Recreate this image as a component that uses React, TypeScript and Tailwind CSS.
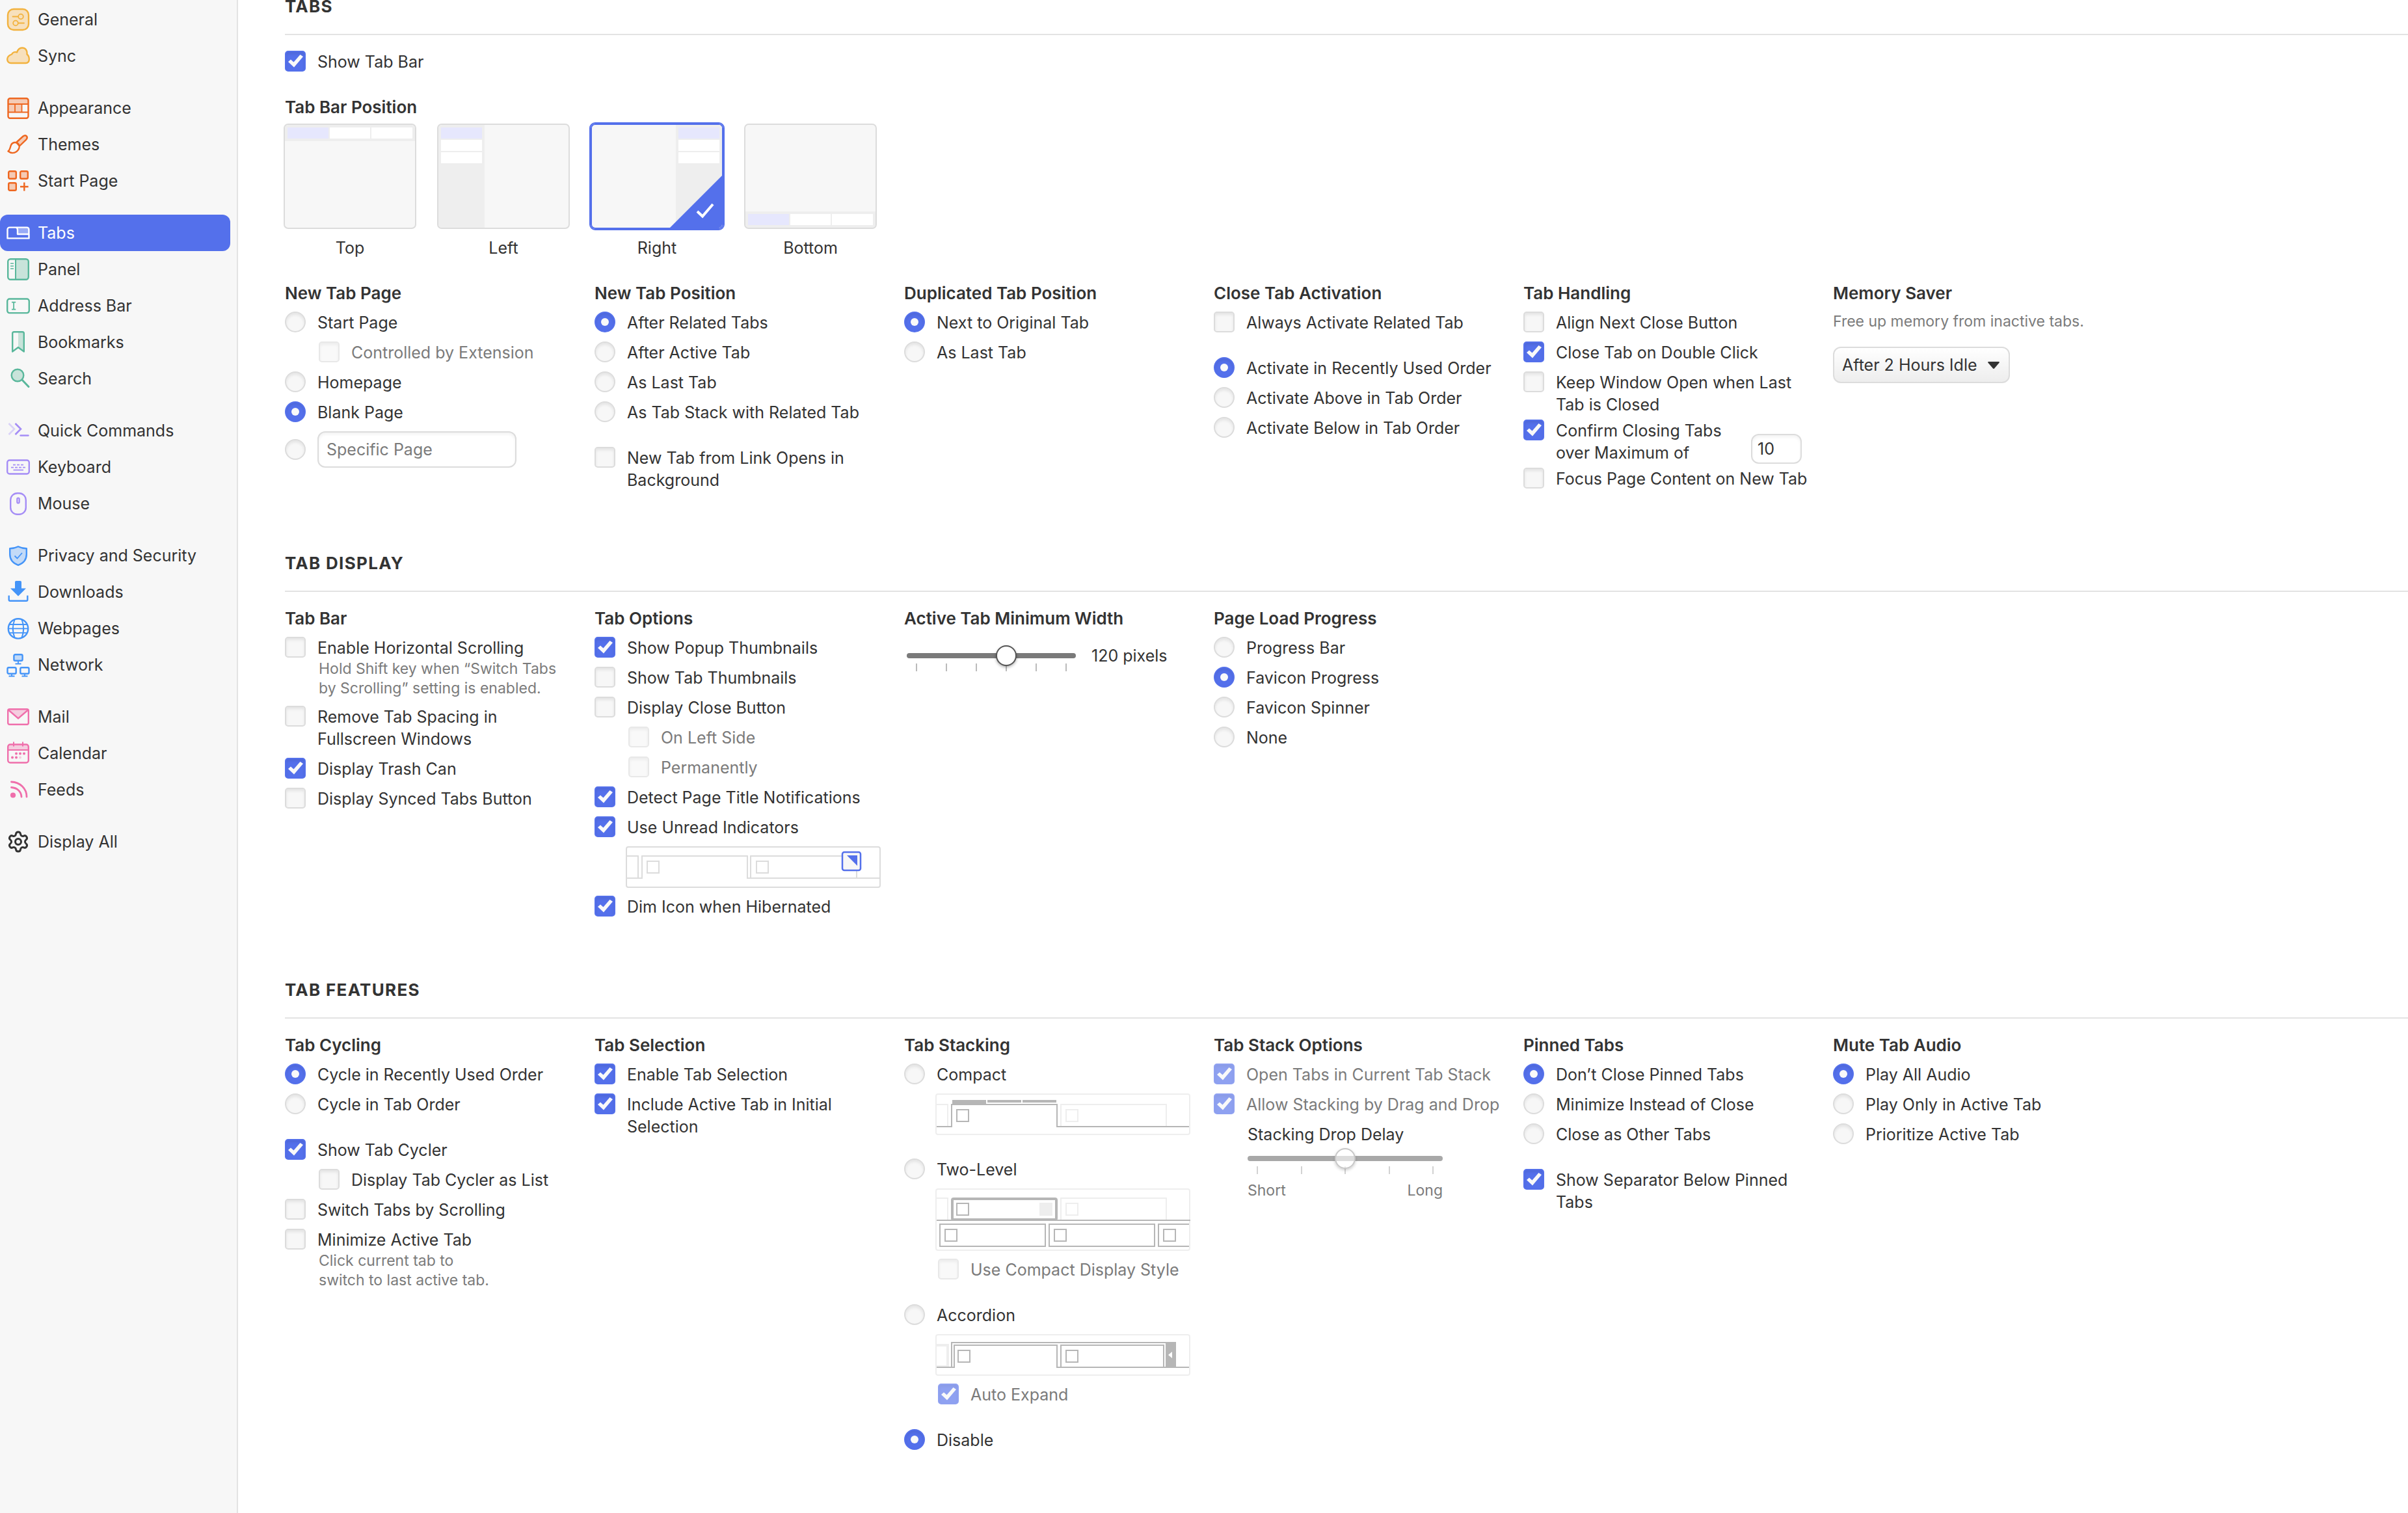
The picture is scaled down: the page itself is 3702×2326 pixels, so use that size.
import React from "react";
import { Settings } from "lucide-react";

/* ---------- sidebar icons ---------- */

function Svg({ children }: { children: React.ReactNode }) {
  return (
    <svg viewBox="0 0 36 36" width={36} height={36} fill="none" strokeWidth={2.4} aria-hidden="true" className="shrink-0 overflow-visible">
      {children}
    </svg>
  );
}

const Y = "#f2b23e";
const YL = "#f7e0bc";
const O = "#ee6720";
const OL = "#f5cbb5";
const G = "#59b79b";
const GL = "#c8e3da";
const P = "#a58df6";
const PL = "#dad2f8";
const B = "#4494f8";
const BL = "#c3daf7";
const K = "#ef6fab";
const KL = "#f4cddf";

const icons: Record<string, React.ReactNode> = {
  General: (
    <Svg>
      <rect x="2" y="2" width="32" height="32" rx="9" stroke={Y} fill={YL} />
      <g stroke={Y} strokeWidth="1.8" strokeLinecap="round">
        <path d="M9.5 13.500h8.500M18 23.500h9" />
        <circle cx="22" cy="13.500" r="3.800" />
        <circle cx="14" cy="23.500" r="3.800" />
      </g>
    </Svg>
  ),
  Sync: (
    <Svg>
      <path d="M7 29C3.500 29 1.200 26.500 1.200 23c0-3.500 2.800-6 6.800-7.500 1.500-3.200 5-4.200 8-3C17.500 8 20.500 5.500 24 5.500c5 0 8 3.500 7.500 10 2 1.500 3.300 4.500 3.300 7.500 0 4-2.300 6-5.300 6z" stroke={Y} fill={YL} strokeLinejoin="round" />
    </Svg>
  ),
  Appearance: (
    <Svg>
      <path d="M3 4h30v8H3zM3 12h20v12H3z" fill={OL} />
      <rect x="2.500" y="3.200" width="31" height="30.600" rx="3" stroke={O} />
      <path d="M2.500 12h31M2.500 24.500h31M13 12v12.500M23.500 12v12.500" stroke={O} strokeWidth="1.800" />
    </Svg>
  ),
  Themes: (
    <Svg>
      <path d="M15 15 25.500 5.500c4-3.400 8.200.8 5 4.800L20 20.500z" stroke={O} fill={OL} strokeLinejoin="round" />
      <path d="M2.500 28.500c3-2 2.800-5.500 4.500-9.500 2-4.500 8.500-5.500 11.500-1.500 2.500 3.500 1 8.500-3 11.500-4 2.800-9 2.500-13-.5z" stroke={O} strokeLinejoin="round" />
    </Svg>
  ),
  "Start Page": (
    <Svg>
      <g stroke={O} fill={OL}>
        <rect x="3.200" y="3.200" width="11.600" height="11.600" rx="2" />
        <rect x="21.200" y="3.200" width="11.600" height="11.600" rx="2" />
        <rect x="3.200" y="21.200" width="11.600" height="11.600" rx="2" />
      </g>
      <path d="M27.300 20.500v13M21 27h12.600" stroke={O} />
    </Svg>
  ),
  Tabs: (
    <Svg>
      <path d="M18 12c0-1.500.8-2.400 2.400-2.400H31c2.300 0 3.400 1.300 3.400 3.400v7H18z" fill="#99abf6" />
      <path d="M34.400 20V13c0-2.100-1.100-3.400-3.400-3.400H5c-2.300 0-3.500 1.300-3.500 3.400v13.400h33V20H17v-6.500c0-2.500-1-3.900-3-3.900" stroke="#fff" strokeLinejoin="round" />
    </Svg>
  ),
  Panel: (
    <Svg>
      <path d="M14 2h17c2 0 3 1 3 3v26c0 2-1 3-3 3H14z" fill={GL} />
      <rect x="2.200" y="2.200" width="31.600" height="31.600" rx="4" stroke={G} />
      <path d="M14 2v32" stroke={G} strokeWidth="2" />
      <path d="M6 9h5M6 13h5M6 17h5" stroke={G} strokeWidth="1.600" />
    </Svg>
  ),
  "Address Bar": (
    <Svg>
      <rect x="1.200" y="7.500" width="33.600" height="21.600" rx="3.500" stroke={G} />
      <path d="M8 12.700h6.200M8 23.700h6.200M11.100 12.700v11" stroke={G} strokeWidth="1.800" />
    </Svg>
  ),
  Bookmarks: (
    <Svg>
      <path d="M18 2h7c1.300 0 2 .7 2 2v28.500L18 25z" fill={GL} />
      <path d="M9.200 4.500c0-1.500.8-2.300 2.300-2.300h13c1.500 0 2.300.8 2.300 2.300v28L18 26l-8.800 6.500z" stroke={G} strokeLinejoin="round" />
    </Svg>
  ),
  Search: (
    <Svg>
      <circle cx="17" cy="13" r="9.300" stroke={G} fill={GL} />
      <path d="m24 20 10 10.500" stroke={G} strokeWidth="3" strokeLinecap="round" />
    </Svg>
  ),
  "Quick Commands": (
    <Svg>
      <path d="m3.500 7 8.500 8.500-8.500 8.500" stroke={PL} strokeWidth="2.600" />
      <path d="m13.500 7 8.500 8.500-8.500 8.500" stroke={P} strokeWidth="2.600" />
      <path d="M21.500 25.500h12" stroke={P} strokeLinecap="round" />
    </Svg>
  ),
  Keyboard: (
    <Svg>
      <rect x="1.200" y="7.500" width="33.600" height="21" rx="3.500" stroke={P} />
      <g stroke={P} strokeWidth="1.800">
        <path d="M10 14.600h16.500" strokeDasharray="4 2" />
        <path d="M7 18.600h22.500" strokeDasharray="4 2" />
        <path d="M10.500 22.600h15.500" />
      </g>
    </Svg>
  ),
  Mouse: (
    <Svg>
      <rect x="6.200" y="2.200" width="23.600" height="32.600" rx="10.500" stroke={P} />
      <rect x="16.200" y="9.500" width="3.600" height="8" rx="1.800" stroke={P} fill={PL} strokeWidth="2" />
    </Svg>
  ),
  "Privacy and Security": (
    <Svg>
      <path d="M18 4.300c4 2 8.500 2.900 12.800 3V16c0 8.500-5 14-12.800 16.800C10.200 30 5.200 24.500 5.200 16V7.300c4.300-.1 8.800-1 12.800-3z" stroke={B} fill={BL} strokeLinejoin="round" />
      <path d="m12.500 18.500 4 4 7.500-8.500" stroke={B} strokeWidth="1.800" />
    </Svg>
  ),
  Downloads: (
    <Svg>
      <path d="M13 3c0-1.300.7-2 2-2h6c1.300 0 2 .7 2 2v9.500h7L18 24.500 6 12.500h7z" fill={B} />
      <path d="M3.700 23.500V30c0 1.200.6 1.800 1.800 1.800h25c1.200 0 1.800-.6 1.800-1.800v-6.500" stroke={B} />
    </Svg>
  ),
  Webpages: (
    <Svg>
      <circle cx="18" cy="18.400" r="15.200" stroke={B} />
      <path d="M12.500 4.500c-3.300 8.500-3.300 19.300 0 27.800M23.500 4.500c3.300 8.500 3.300 19.300 0 27.800" stroke={B} strokeWidth="2" />
      <path d="M4 12h28M3 18.400h30M4 24.800h28" stroke={B} strokeWidth="1.800" />
    </Svg>
  ),
  Network: (
    <Svg>
      <g stroke={B}>
        <rect x="11.400" y="2.200" width="13.200" height="9.600" rx="2" fill={BL} />
        <rect x="1.500" y="22.200" width="13.200" height="9.600" rx="2" />
        <rect x="21.300" y="22.200" width="13.200" height="9.600" rx="2" />
        <path d="M18 12v4M13.500 16.500h9M8 32v3M3.500 35.500h9M28 32v3M23.500 35.500h9" strokeWidth="1.800" />
      </g>
    </Svg>
  ),
  Mail: (
    <Svg>
      <path d="M3 6h30L18 20.500z" fill={KL} />
      <rect x="2.200" y="6.200" width="31.600" height="23.600" rx="2.500" stroke={K} />
      <path d="m3 7.500 15 13 15-13" stroke={K} />
    </Svg>
  ),
  Calendar: (
    <Svg>
      <path d="M3 5h30v8H3z" fill={KL} />
      <rect x="2.200" y="4.500" width="31.600" height="28" rx="3.500" stroke={K} />
      <path d="M2 13h32M11 .500v7M25 .500v7" stroke={K} strokeWidth="2" />
      <g fill={K}>
        <circle cx="15" cy="18.500" r="2" />
        <circle cx="21" cy="18.500" r="2" />
        <circle cx="27" cy="18.500" r="2" />
        <circle cx="9" cy="24.500" r="2" />
        <circle cx="15" cy="24.500" r="2" />
      </g>
      <circle cx="21" cy="24.500" r="2" fill={KL} />
    </Svg>
  ),
  Feeds: (
    <Svg>
      <circle cx="10" cy="26.500" r="4.100" fill={K} />
      <path d="M7.500 14.500c8.500.5 15 6 15.500 14.500M7.500 6C20.500 6.500 31 16 31 29" stroke={K} strokeWidth="2.800" strokeLinecap="round" />
    </Svg>
  ),
  "Display All": <Settings size={36} strokeWidth={2} color="#333333" aria-hidden="true" className="shrink-0" />,
};

const groups = [
  ["General", "Sync"],
  ["Appearance", "Themes", "Start Page"],
  ["Tabs", "Panel", "Address Bar", "Bookmarks", "Search"],
  ["Quick Commands", "Keyboard", "Mouse"],
  ["Privacy and Security", "Downloads", "Webpages", "Network"],
  ["Mail", "Calendar", "Feeds"],
  ["Display All"],
];

function Sidebar() {
  return (
    <nav aria-label="Settings" className="flex w-[366px] shrink-0 flex-col gap-6 border-r-2 border-[#e3e3e3] bg-[#f7f7f7] pt-0.5">
      {groups.map((g) => (
        <ul key={g[0]}>
          {g.map((name) => (
            <li key={name}>
              <a
                href="#"
                aria-current={name === "Tabs" ? "page" : undefined}
                className="mr-2.5 flex h-14 items-center gap-3 rounded-xl pl-2.5 aria-[current=page]:bg-[#5470eb] aria-[current=page]:text-white"
              >
                {icons[name]}
                <span>{name}</span>
              </a>
            </li>
          ))}
        </ul>
      ))}
    </nav>
  );
}

/* ---------- form controls ---------- */

type OptionProps = {
  label: React.ReactNode;
  on?: boolean;
  disabled?: boolean;
  hint?: React.ReactNode;
  tight?: boolean;
};

const boxStyle =
  "peer col-start-1 row-start-1 size-8 appearance-none border-2 border-[#dcdcdc] bg-[#f7f7f7] shadow-[inset_0_3px_4px_rgba(0,0,0,0.08)] checked:border-[#5470eb] checked:bg-[#5470eb] disabled:opacity-65";

function Check({ label, on, disabled, hint, tight }: OptionProps) {
  return (
    <div className={tight ? "pb-1.5" : "pb-3"}>
      <label className={disabled ? "flex items-start gap-[18px] text-[#7b7b7b]" : "flex items-start gap-[18px]"}>
        <span className="grid shrink-0">
          <input type="checkbox" defaultChecked={on} disabled={disabled} className={boxStyle + " rounded-[5px]"} />
          <svg viewBox="0 0 32 32" className="pointer-events-none invisible z-10 col-start-1 row-start-1 size-8 peer-checked:visible" aria-hidden="true">
            <path d="M5 17l4-3.500 4.500 4L23.500 6l4.500 3-14 16.500z" fill="#f9f9f9" />
          </svg>
        </span>
        <span>{label}</span>
      </label>
      {hint && <Hint>{hint}</Hint>}
    </div>
  );
}

function Hint({ children }: { children: React.ReactNode }) {
  return <p className="ml-[52px] text-[23px] leading-[30px] text-[#7b7b7b]">{children}</p>;
}

function RadioDot({ name, on, label }: { name: string; on?: boolean; label?: string }) {
  return (
    <span className="grid shrink-0 place-items-center">
      <input type="radio" name={name} defaultChecked={on} aria-label={label} className={boxStyle + " rounded-full"} />
      <span className="pointer-events-none invisible z-10 col-start-1 row-start-1 size-3 rounded-full bg-[#f9f9f9] peer-checked:visible" />
    </span>
  );
}

function Radio({ name, label, on }: { name: string; label: string; on?: boolean }) {
  return (
    <label className="flex items-start gap-[18px] pb-3">
      <RadioDot name={name} on={on} />
      <span>{label}</span>
    </label>
  );
}

function Slider({ label, ticks, value, disabled }: { label: string; ticks: number; value: number; disabled?: boolean }) {
  return (
    <div className={disabled ? "opacity-65" : ""}>
      <input
        type="range"
        aria-label={label}
        min={0}
        max={ticks - 1}
        defaultValue={value}
        disabled={disabled}
        className="relative z-10 block h-8 w-full appearance-none bg-transparent [&::-webkit-slider-runnable-track]:h-2 [&::-webkit-slider-runnable-track]:rounded-full [&::-webkit-slider-runnable-track]:bg-[#7a7a7a] [&::-webkit-slider-thumb]:-mt-3 [&::-webkit-slider-thumb]:size-8 [&::-webkit-slider-thumb]:appearance-none [&::-webkit-slider-thumb]:rounded-full [&::-webkit-slider-thumb]:border-2 [&::-webkit-slider-thumb]:border-[#555555] [&::-webkit-slider-thumb]:bg-white [&::-webkit-slider-thumb]:shadow-[0_2px_4px_rgba(0,0,0,0.3)] disabled:[&::-webkit-slider-thumb]:border-[#aaaaaa] disabled:[&::-webkit-slider-thumb]:bg-white/60"
      />
      <div className="-mt-1 flex justify-between px-[14px]">
        {Array.from({ length: ticks }, (_, i) => (
          <span key={i} className="h-3 w-0.5 bg-[#bbbbbb]" />
        ))}
      </div>
    </div>
  );
}

/* ---------- layout helpers ---------- */

function Section({ title, children }: { title: string; children: React.ReactNode }) {
  return (
    <section className="mb-[89px]">
      <h2 className="mb-6 border-b-2 border-[#e3e3e3] pb-8 text-[26px] leading-5 font-bold tracking-wider">{title}</h2>
      {children}
    </section>
  );
}

function Columns({ children }: { children: React.ReactNode }) {
  return <div className="grid grid-cols-[repeat(auto-fill,440px)] gap-x-9">{children}</div>;
}

function Column({ title, children }: { title: string; children: React.ReactNode }) {
  return (
    <div role="group" aria-label={title}>
      <h3 className="mb-[11px] text-[26px] leading-[34px] font-semibold">{title}</h3>
      {children}
    </div>
  );
}

/* ---------- tab bar position cards ---------- */

function MiniTabs({ vertical }: { vertical?: boolean }) {
  const tab = vertical ? "h-[17px] w-full" : "h-[17px] flex-1";
  return (
    <>
      <span className={tab + " bg-[#e6e7fd]"} />
      <span className={tab + " bg-white"} />
      <span className={tab + " bg-white"} />
    </>
  );
}

function PositionCard({ label, on }: { label: string; on?: boolean }) {
  const vertical = label === "Left" || label === "Right";
  const direction = { Top: "flex-col", Left: "flex-row", Right: "flex-row-reverse", Bottom: "flex-col-reverse" }[label];
  return (
    <label className="flex flex-col items-center gap-3">
      <input type="radio" name="tab-bar-position" defaultChecked={on} className="peer sr-only" />
      <span
        className={
          "relative flex h-[162px] w-[204px] overflow-hidden rounded-[7px] border-2 border-[#dcdcdc] bg-[#f7f7f7] outline-[#5470eb] peer-checked:border-[#5470eb] peer-checked:outline-2 " +
          direction
        }
      >
        <span className={vertical ? "flex w-[71px] flex-col gap-0.5 bg-[#eeeeee] p-1" : "flex gap-0.5 bg-[#eeeeee] p-1"}>
          <MiniTabs vertical={vertical} />
        </span>
        {on && (
          <svg viewBox="0 0 80 80" className="absolute right-0 bottom-0 size-20" aria-hidden="true">
            <path d="M80 0v80H0z" fill="#5470eb" />
            <path d="m42 55 8 7.500L66 44" fill="none" stroke="#fff" strokeWidth="4" />
          </svg>
        )}
      </span>
      <span>{label}</span>
    </label>
  );
}

/* ---------- tab strip illustrations ---------- */

const L = "#eeeeee";
const D = "#b6b6b6";

function Strip({ tall, color, children }: { tall?: boolean; color: string; children: React.ReactNode }) {
  const h = tall ? 96 : 64;
  return (
    <svg viewBox={`0 0 392 ${h}`} width={392} height={h} fill="none" strokeWidth={2} className="mb-3 ml-12 block" aria-hidden="true">
      <rect x="1" y="1" width="390" height={h - 2} rx="3" stroke={color} />
      {children}
    </svg>
  );
}

function UnreadStrip() {
  return (
    <Strip color="#dcdcdc">
      <g stroke="#dcdcdc">
        <path d="M2 15h17v34M2 49h23V15h162v34h203M192 49V15h163v34" />
        <rect x="33" y="23" width="18" height="18" />
        <rect x="201" y="23" width="18" height="18" />
      </g>
      <rect x="333" y="9" width="28" height="28" rx="3" fill="#f7f7f7" stroke="#5470eb" strokeWidth="2.500" />
      <path d="M340 14h16v16z" fill="#5470eb" />
    </Strip>
  );
}

function CompactStrip() {
  return (
    <Strip color={L}>
      <g stroke={L}>
        <path d="M2 17h17v33M193 50V17h162v33" />
        <rect x="201" y="25" width="18" height="18" />
      </g>
      <path d="M2 51h23V17h162v34h203" stroke={D} />
      <rect x="33" y="25" width="18" height="18" stroke={D} />
      <path d="M26 10h52v6H26zM80 10h52v4H80zM134 10h52v4h-52z" fill={D} />
    </Strip>
  );
}

function TwoLevelStrip() {
  return (
    <Strip tall color={L}>
      <g stroke={L}>
        <path d="M2 15h17v33M193 48V15h162v33" />
        <rect x="201" y="23" width="18" height="18" />
      </g>
      <path d="M160 22h20v20h-20z" fill={L} />
      <g stroke={D}>
        <path d="M2 49h390M390 55h-47v34h47" />
        <rect x="26" y="16" width="160" height="32" rx="2" strokeWidth="4" />
        <rect x="33" y="23" width="18" height="18" />
        <rect x="7" y="55" width="162" height="34" />
        <rect x="175" y="55" width="162" height="34" />
        <rect x="15" y="63" width="18" height="18" />
        <rect x="183" y="63" width="18" height="18" />
        <rect x="351" y="63" width="18" height="18" />
      </g>
    </Strip>
  );
}

function AccordionStrip() {
  return (
    <Strip color={L}>
      <path d="M2 17h17v33H2" stroke={L} strokeWidth="4" />
      <g stroke={D}>
        <path d="M2 51h27V17h158v34h203M25 51V13h345M193 51V17h158v34" />
        <rect x="35" y="25" width="18" height="18" />
        <rect x="201" y="25" width="18" height="18" />
      </g>
      <path d="M354 12h16v39h-16z" fill={D} />
      <path d="M364 27v10l-6-5z" fill="#fff" />
    </Strip>
  );
}

/* ---------- page ---------- */

const fieldStyle =
  "border-2 border-[#dcdcdc] bg-white shadow-[inset_0_3px_4px_rgba(0,0,0,0.05)] placeholder:text-[#7b7b7b]";

export default function App() {
  return (
    <div className="flex min-h-screen bg-white font-['Inter',sans-serif] text-[25px] leading-[34px] text-[#333333]">
      <Sidebar />
      <main className="min-w-0 flex-1 pl-[72px]">
        <Section title="TABS">
          <Check label="Show Tab Bar" on />
          <h3 className="mt-6 mb-2 text-[26px] leading-[34px] font-semibold">Tab Bar Position</h3>
          <div role="radiogroup" aria-label="Tab Bar Position" className="-ml-0.5 mb-9 flex flex-wrap gap-8">
            <PositionCard label="Top" />
            <PositionCard label="Left" />
            <PositionCard label="Right" on />
            <PositionCard label="Bottom" />
          </div>
          <Columns>
            <Column title="New Tab Page">
              <Radio name="new-tab-page" label="Start Page" />
              <div className="ml-[52px]">
                <Check label="Controlled by Extension" disabled />
              </div>
              <Radio name="new-tab-page" label="Homepage" />
              <Radio name="new-tab-page" label="Blank Page" on />
              <div className="flex items-center gap-[18px]">
                <RadioDot name="new-tab-page" label="Specific Page" />
                <input type="text" placeholder="Specific Page" aria-label="Specific page address" className={fieldStyle + " h-14 w-[306px] rounded-xl px-3"} />
              </div>
            </Column>
            <Column title="New Tab Position">
              <Radio name="new-tab-position" label="After Related Tabs" on />
              <Radio name="new-tab-position" label="After Active Tab" />
              <Radio name="new-tab-position" label="As Last Tab" />
              <Radio name="new-tab-position" label="As Tab Stack with Related Tab" />
              <div className="pt-6">
                <Check label="New Tab from Link Opens in Background" />
              </div>
            </Column>
            <Column title="Duplicated Tab Position">
              <Radio name="duplicated" label="Next to Original Tab" on />
              <Radio name="duplicated" label="As Last Tab" />
            </Column>
            <Column title="Close Tab Activation">
              <Check label="Always Activate Related Tab" />
              <div className="pt-6">
                <Radio name="activation" label="Activate in Recently Used Order" on />
                <Radio name="activation" label="Activate Above in Tab Order" />
                <Radio name="activation" label="Activate Below in Tab Order" />
              </div>
            </Column>
            <Column title="Tab Handling">
              <Check label="Align Next Close Button" />
              <Check label="Close Tab on Double Click" on />
              <Check label="Keep Window Open when Last Tab is Closed" tight />
              <div className="flex w-[428px] items-center justify-between">
                <Check
                  label={
                    <>
                      Confirm Closing Tabs
                      <br />
                      over Maximum of
                    </>
                  }
                  on
                  tight
                />
                <input type="text" defaultValue="10" aria-label="Maximum number of tabs" className={fieldStyle + " mt-4 h-[46px] w-[78px] rounded-xl px-2"} />
              </div>
              <Check label="Focus Page Content on New Tab" />
            </Column>
            <Column title="Memory Saver">
              <p className="text-[23px] leading-[30px] text-[#7b7b7b]">Free up memory from inactive tabs.</p>
              <div className="mt-6 grid w-[272px] items-center">
                <select
                  aria-label="Memory Saver"
                  className="col-start-1 row-start-1 h-14 appearance-none rounded-xl border-2 border-[#dcdcdc] bg-linear-to-b from-white to-[#ededed] px-3"
                >
                  <option>After 2 Hours Idle</option>
                </select>
                <svg viewBox="0 0 18 11" className="pointer-events-none col-start-1 row-start-1 mr-4 h-[11px] w-[18px] justify-self-end" aria-hidden="true">
                  <path d="M1.500 0h15c1.300 0 1.600 1 1 1.800l-7.300 8.500c-.7.800-1.700.8-2.400 0L.5 1.800C-.1 1 .2 0 1.500 0z" fill="#333333" />
                </svg>
              </div>
            </Column>
          </Columns>
        </Section>

        <Section title="TAB DISPLAY">
          <Columns>
            <Column title="Tab Bar">
              <Check
                label="Enable Horizontal Scrolling"
                hint={
                  <>
                    Hold Shift key when “Switch Tabs
                    <br />
                    by Scrolling” setting is enabled.
                  </>
                }
              />
              <Check label="Remove Tab Spacing in Fullscreen Windows" />
              <Check label="Display Trash Can" on />
              <Check label="Display Synced Tabs Button" />
            </Column>
            <Column title="Tab Options">
              <Check label="Show Popup Thumbnails" on />
              <Check label="Show Tab Thumbnails" />
              <Check label="Display Close Button" />
              <div className="ml-[52px]">
                <Check label="On Left Side" disabled />
                <Check label="Permanently" disabled />
              </div>
              <Check label="Detect Page Title Notifications" on />
              <Check label="Use Unread Indicators" on />
              <UnreadStrip />
              <Check label="Dim Icon when Hibernated" on />
            </Column>
            <Column title="Active Tab Minimum Width">
              <div className="mt-6 ml-1 flex items-start gap-6">
                <div className="w-[260px]">
                  <Slider label="Active Tab Minimum Width" ticks={6} value={3} />
                </div>
                <output className="leading-8">120 pixels</output>
              </div>
            </Column>
            <Column title="Page Load Progress">
              <Radio name="progress" label="Progress Bar" />
              <Radio name="progress" label="Favicon Progress" on />
              <Radio name="progress" label="Favicon Spinner" />
              <Radio name="progress" label="None" />
            </Column>
          </Columns>
        </Section>

        <Section title="TAB FEATURES">
          <Columns>
            <Column title="Tab Cycling">
              <Radio name="cycling" label="Cycle in Recently Used Order" on />
              <Radio name="cycling" label="Cycle in Tab Order" />
              <div className="pt-6">
                <Check label="Show Tab Cycler" on />
                <div className="ml-[52px]">
                  <Check label="Display Tab Cycler as List" />
                </div>
                <Check label="Switch Tabs by Scrolling" />
                <Check
                  label="Minimize Active Tab"
                  hint={
                    <>
                      Click current tab to
                      <br />
                      switch to last active tab.
                    </>
                  }
                />
              </div>
            </Column>
            <Column title="Tab Selection">
              <Check label="Enable Tab Selection" on />
              <Check label="Include Active Tab in Initial Selection" on />
            </Column>
            <Column title="Tab Stacking">
              <Radio name="stacking" label="Compact" />
              <CompactStrip />
              <div className="pt-6">
                <Radio name="stacking" label="Two-Level" />
                <TwoLevelStrip />
                <div className="ml-[52px]">
                  <Check label="Use Compact Display Style" disabled />
                </div>
              </div>
              <div className="pt-6">
                <Radio name="stacking" label="Accordion" />
                <AccordionStrip />
                <div className="ml-[52px]">
                  <Check label="Auto Expand" on disabled />
                </div>
              </div>
              <div className="pt-6">
                <Radio name="stacking" label="Disable" on />
              </div>
            </Column>
            <Column title="Tab Stack Options">
              <Check label="Open Tabs in Current Tab Stack" on disabled />
              <Check label="Allow Stacking by Drag and Drop" on disabled />
              <div className="ml-[52px] w-[300px]">
                <p className="mb-1">Stacking Drop Delay</p>
                <Slider label="Stacking Drop Delay" ticks={5} value={2} disabled />
                <div className="mt-2.5 flex justify-between text-[23px] leading-[30px] text-[#7b7b7b]">
                  <span>Short</span>
                  <span>Long</span>
                </div>
              </div>
            </Column>
            <Column title="Pinned Tabs">
              <Radio name="pinned" label="Don’t Close Pinned Tabs" on />
              <Radio name="pinned" label="Minimize Instead of Close" />
              <Radio name="pinned" label="Close as Other Tabs" />
              <div className="pt-6">
                <Check label="Show Separator Below Pinned Tabs" on />
              </div>
            </Column>
            <Column title="Mute Tab Audio">
              <Radio name="mute" label="Play All Audio" on />
              <Radio name="mute" label="Play Only in Active Tab" />
              <Radio name="mute" label="Prioritize Active Tab" />
            </Column>
          </Columns>
        </Section>
      </main>
    </div>
  );
}
